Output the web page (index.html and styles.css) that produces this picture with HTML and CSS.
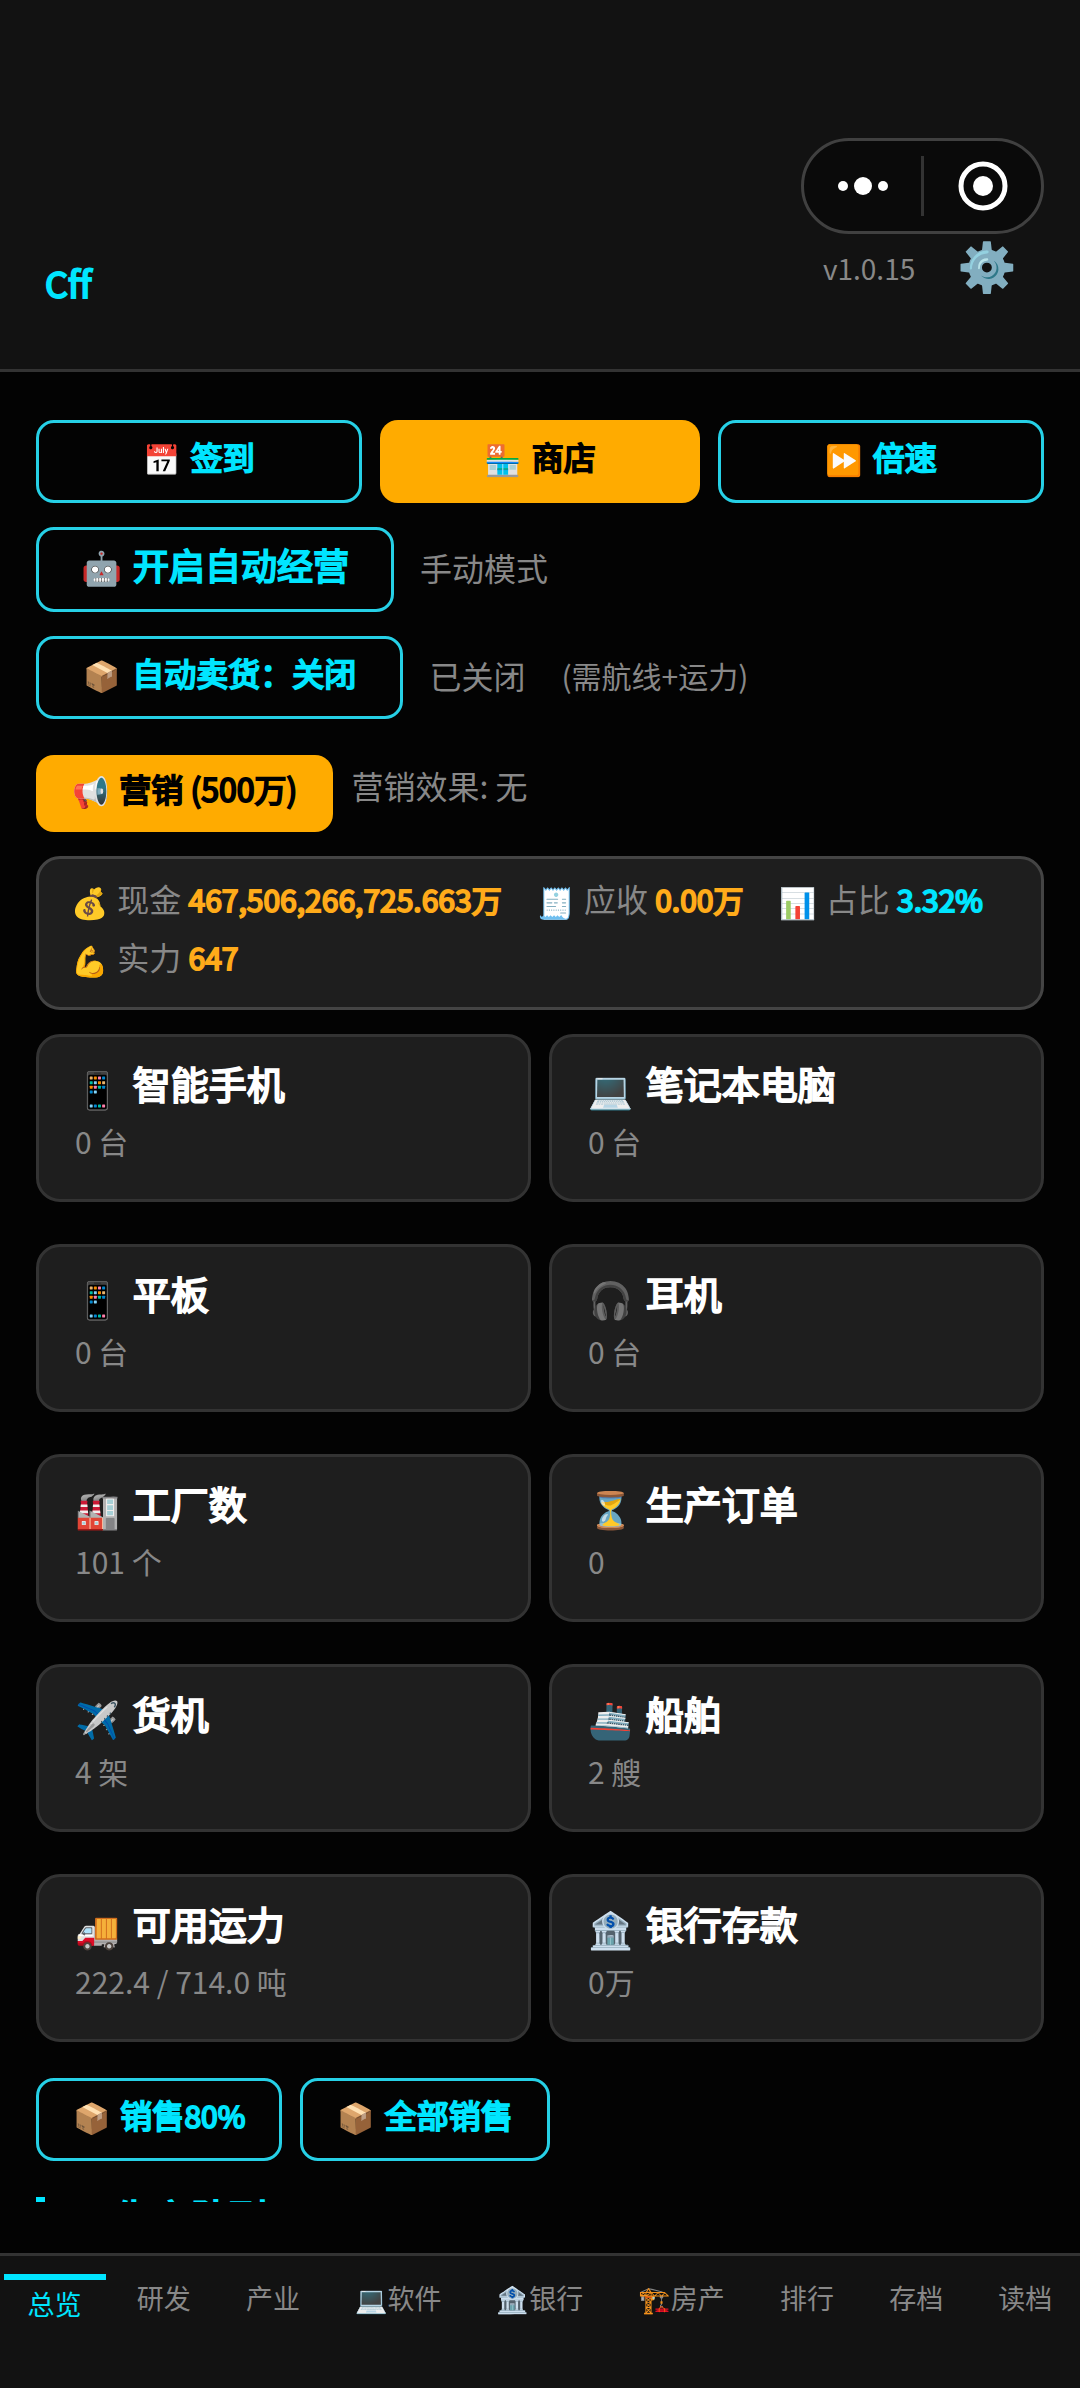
FILE: index.html
```html
<!DOCTYPE html>
<html lang="zh-CN">
<head>
<meta charset="utf-8">
<meta name="viewport" content="width=device-width">
<title>总览</title>
<link rel="stylesheet" href="styles.css">
</head>
<body>
<header class="header">
  <h1 class="company">Cff</h1>
  <div class="header-tools">
    <span class="version">v1.0.15</span>
    <button class="gear" type="button" aria-label="设置">⚙️</button>
  </div>
  <div class="capsule">
    <button class="capsule-btn" type="button" aria-label="更多">
      <svg width="52" height="52" viewBox="0 0 52 52" fill="#fff"><circle cx="6" cy="26" r="5"/><circle cx="26" cy="26" r="9"/><circle cx="46" cy="26" r="5"/></svg>
    </button>
    <span class="capsule-line"></span>
    <button class="capsule-btn" type="button" aria-label="关闭">
      <svg width="52" height="52" viewBox="0 0 52 52"><circle cx="26" cy="26" r="22" fill="none" stroke="#fff" stroke-width="5"/><circle cx="26" cy="26" r="10" fill="#fff"/></svg>
    </button>
  </div>
</header>

<main class="main">
  <div class="row row-equal">
    <button class="btn" type="button"><span class="emoji">📅</span>签到</button>
    <button class="btn btn-gold" type="button"><span class="emoji">🏪</span>商店</button>
    <button class="btn" type="button"><span class="emoji">⏩</span>倍速</button>
  </div>
  <div class="row">
    <button class="btn btn-wide btn-large" type="button"><span class="emoji">🤖</span>开启自动经营</button>
    <span class="hint">手动模式</span>
  </div>
  <div class="row row-last">
    <button class="btn btn-wide" type="button"><span class="emoji">📦</span>自动卖货：关闭</button>
    <span class="hint">已关闭</span>
    <span class="hint hint-small">(需航线+运力)</span>
  </div>
  <div class="row row-market">
    <button class="btn btn-gold" type="button"><span class="emoji">📢</span>营销 (500万)</button>
    <span class="effect">营销效果: 无</span>
  </div>

  <section class="summary">
    <div class="stat"><span class="emoji">💰</span>现金 <b class="value">467,506,266,725.663万</b></div>
    <div class="stat"><span class="emoji">🧾</span>应收 <b class="value">0.00万</b></div>
    <div class="stat"><span class="emoji">📊</span>占比 <b class="value value-cyan">3.32%</b></div>
    <div class="stat"><span class="emoji">💪</span>实力 <b class="value">647</b></div>
  </section>

  <section class="cards">
    <article class="card"><h2><span class="emoji">📱</span>智能手机</h2><p>0 台</p></article>
    <article class="card"><h2><span class="emoji">💻</span>笔记本电脑</h2><p>0 台</p></article>
    <article class="card"><h2><span class="emoji">📱</span>平板</h2><p>0 台</p></article>
    <article class="card"><h2><span class="emoji">🎧</span>耳机</h2><p>0 台</p></article>
    <article class="card"><h2><span class="emoji">🏭</span>工厂数</h2><p>101 个</p></article>
    <article class="card"><h2><span class="emoji">⏳</span>生产订单</h2><p>0</p></article>
    <article class="card"><h2><span class="emoji">✈️</span>货机</h2><p>4 架</p></article>
    <article class="card"><h2><span class="emoji">🚢</span>船舶</h2><p>2 艘</p></article>
    <article class="card"><h2><span class="emoji">🚚</span>可用运力</h2><p>222.4 / 714.0 吨</p></article>
    <article class="card"><h2><span class="emoji">🏦</span>银行存款</h2><p>0万</p></article>
  </section>

  <div class="row row-last">
    <button class="btn btn-sell" type="button"><span class="emoji">📦</span><span>销售<span class="num">80%</span></span></button>
    <button class="btn btn-sell" type="button"><span class="emoji">📦</span>全部销售</button>
  </div>

  <h2 class="section-title"><span class="emoji">⏳</span>生产队列</h2>
</main>

<nav class="tabs">
  <a class="tab tab-active" href="#overview">总览</a>
  <a class="tab" href="#research">研发</a>
  <a class="tab" href="#industry">产业</a>
  <a class="tab" href="#software"><span class="emoji">💻</span>软件</a>
  <a class="tab" href="#bank"><span class="emoji">🏦</span>银行</a>
  <a class="tab" href="#estate"><span class="emoji">🏗️</span>房产</a>
  <a class="tab" href="#rank">排行</a>
  <a class="tab" href="#save">存档</a>
  <a class="tab" href="#load">读档</a>
</nav>
</body>
</html>
```
FILE: styles.css
```css
* { box-sizing: border-box; }

body {
  margin: 0;
  height: 100vh;
  display: flex;
  flex-direction: column;
  background: #030303;
  color: #888;
  font: 32px/48px "Noto Sans CJK SC", "Noto Color Emoji", sans-serif;
  font-variant-ligatures: none;
  white-space: nowrap;
}

h1, h2, p { margin: 0; font-weight: 400; }
button { font: inherit; color: inherit; margin: 0; cursor: pointer; }

.emoji {
  font-family: "Noto Color Emoji", sans-serif;
  font-size: 30px;
  line-height: 48px;
  -webkit-text-stroke: 0;
}

/* Header */
.header {
  position: relative;
  flex: none;
  display: flex;
  justify-content: space-between;
  align-items: flex-start;
  padding: 242px 63px 47px 45px;
  border-bottom: 3px solid #333;
  background: #121212;
}
.company {
  font-size: 36px;
  line-height: 80px;
  color: #00e5ff;
  -webkit-text-stroke: 2px currentColor;
}
.header-tools { display: flex; align-items: center; gap: 42px; height: 52px; }
.version { font-size: 28px; }
.gear {
  padding: 0;
  border: 0;
  background: none;
  font: 48px/52px "Noto Color Emoji", sans-serif;
}
.capsule {
  position: absolute;
  top: 138px;
  right: 36px;
  display: flex;
  align-items: center;
  width: 243px;
  height: 96px;
  border: 3px solid #404040;
  border-radius: 48px;
  background: #0a0a0a;
}
.capsule-btn {
  flex: 1;
  display: flex;
  justify-content: center;
  padding: 0;
  border: 0;
  background: none;
}
.capsule-line { width: 3px; height: 60px; background: #333; }

/* Scrolling content */
.main {
  flex: 1;
  min-height: 0;
  overflow-y: auto;
  scrollbar-width: none;
  margin-bottom: 51px;
  padding: 48px 36px 0;
}
.row { display: flex; align-items: center; gap: 18px; margin-bottom: 24px; }
.row-last { margin-bottom: 36px; }
.row-equal { align-items: stretch; }
.row-equal .btn { flex: 1 1 0; }

.btn {
  display: flex;
  justify-content: center;
  gap: 10px;
  padding: 14px 36px 25px;
  border: 3px solid #26d0e6;
  border-radius: 18px;
  background: transparent;
  color: #00e5ff;
  line-height: 38px;
  -webkit-text-stroke: 2px currentColor;
}
.btn .emoji { height: 38px; }
.btn-wide { gap: 12px; padding-left: 44px; padding-right: 44px; }
.btn-large { gap: 11px; padding-left: 42px; padding-right: 42px; font-size: 36px; line-height: 40px; }
.btn-large .emoji { font-size: 33px; line-height: 50px; }
.btn-gold { border-width: 0; background: #ffab00; color: #000; }
.btn-sell { padding-left: 34px; padding-right: 34px; }
.row-equal .btn-gold { padding-top: 17px; padding-bottom: 28px; }
.hint { margin-left: 8px; padding-bottom: 6px; }
.hint-small { margin-left: 18px; font-size: 30px; }
.row-market { align-items: flex-start; }
.effect { line-height: 60px; }

/* Summary strip */
.summary {
  display: flex;
  flex-wrap: wrap;
  column-gap: 36px;
  margin-bottom: 24px;
  padding: 10px 33px 22px 32px;
  border: 3px solid #444;
  border-radius: 24px;
  background: #1e1e1e;
}
.stat { height: 58px; line-height: 58px; }
.stat .emoji { margin-right: 9px; vertical-align: -2px; line-height: 30px; }
.value {
  font-size: 30px;
  font-weight: 400;
  color: #ffab1a;
  -webkit-text-stroke: 2px currentColor;
}
.value-cyan { color: #00e5ff; }

/* Product cards */
.cards {
  display: grid;
  grid-template-columns: 1fr 1fr;
  gap: 42px 18px;
  margin-bottom: 36px;
}
.card {
  padding: 22px 36px 36px;
  border: 3px solid #333;
  border-radius: 24px;
  background: #1e1e1e;
}
.card h2 {
  display: flex;
  gap: 13px;
  margin-bottom: 12px;
  font-size: 38px;
  line-height: 48px;
  color: #fff;
  -webkit-text-stroke: 2px currentColor;
}
.card .emoji { font-size: 36px; line-height: 64px; height: 48px; }
.card p { font-size: 30px; line-height: 44px; }
.num { font-size: 30px; line-height: 30px; }

.section-title {
  display: flex;
  gap: 10px;
  padding-left: 15px;
  border-left: 9px solid #00e5ff;
  font-size: 38px;
  line-height: 38px;
  color: #00e5ff;
  -webkit-text-stroke: 2px currentColor;
}
.section-title .emoji { height: 38px; font-size: 36px; line-height: 56px; }

/* Bottom tabs */
.tabs {
  flex: none;
  display: flex;
  justify-content: space-around;
  align-items: flex-start;
  height: 135px;
  padding-top: 18px;
  border-top: 3px solid #333;
  background: #121212;
}
.tab {
  display: flex;
  padding: 6px 24px;
  color: #888;
  font-size: 27px;
  line-height: 36px;
  text-decoration: none;
}
.tab .emoji { font-size: 26px; line-height: 40px; }
.tab-active { border-top: 6px solid #00e5ff; color: #00e5ff; }
```
